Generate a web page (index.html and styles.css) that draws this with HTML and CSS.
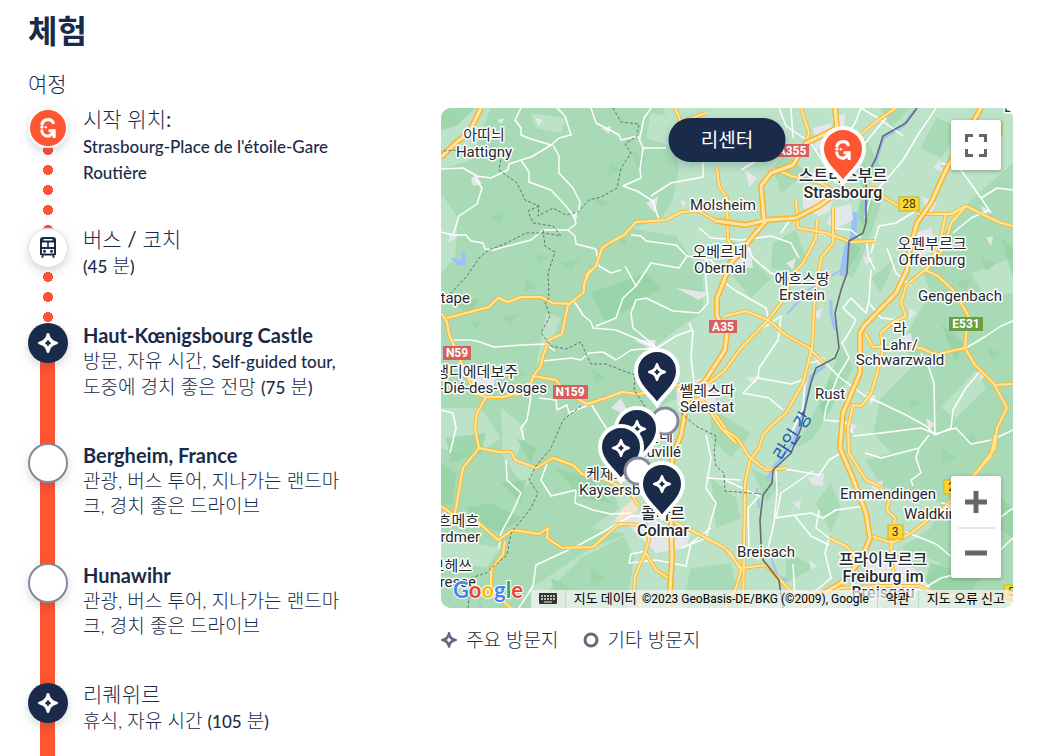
FILE: index.html
```
<!DOCTYPE html>
<html lang="ko">
<head>
    <meta charset="UTF-8">
    <meta name="viewport" content="width=device-width, initial-scale=1.0">
    <title>체험</title>
    <link rel="stylesheet" href="styles.css">
</head>
<body>
    <svg class="sprite" aria-hidden="true">
        <symbol id="star" viewBox="0 0 20 20">
            <path fill-rule="evenodd" d="M10 0C10.900 0 11.300.6 11.600 1.800C12.500 5.500 14.500 7.500 18.200 8.400C19.400 8.700 20 9.100 20 10S19.400 11.300 18.200 11.600C14.500 12.500 12.500 14.500 11.600 18.200C11.300 19.400 10.900 20 10 20S8.700 19.400 8.400 18.200C7.500 14.500 5.500 12.500 1.800 11.600C.6 11.300 0 10.900 0 10S.6 8.700 1.800 8.400C5.500 7.500 7.500 5.500 8.400 1.800C8.700.6 9.100 0 10 0ZM10 6.500Q9 9 6.500 10Q9 11 10 13.500Q11 11 13.500 10Q11 9 10 6.500Z"/>
        </symbol>
        <symbol id="logo" viewBox="0 0 16 20">
            <path d="M13.500 6C13 3.200 11 1.700 8.300 1.700C4.800 1.700 2.300 3.600 1.900 7" fill="none" stroke="currentColor" stroke-width="3.200"/>
            <path d="M1.700 11.500C1.700 15.800 4.500 18.200 8 18.200C10 18.200 11 17.500 14 13.500M8.500 12.700H14.200V20" fill="none" stroke="currentColor" stroke-width="3"/>
            <circle cx="1.900" cy="9" r="1.700"/>
            <circle cx="5.800" cy="9.300" r="1.200"/>
        </symbol>
        <symbol id="pin" viewBox="-24 -24 48 60">
            <path d="M0 33C-5 24-21 14-21-1A21 21 0 0 1 21-1C21 14 5 24 0 33Z" stroke="#fff" stroke-width="4"/>
        </symbol>
    </svg>

    <main class="page">
        <h1>체험</h1>
        <h2>여정</h2>
        <div class="content">
            <ol class="timeline">
                <li class="stop dotted start">
                    <span class="icon icon-start"><svg width="16" height="20"><use href="#logo"/></svg></span>
                    <div class="text">
                        <h3>시작 위치<b>:</b></h3>
                        <p><span class="latin">Strasbourg-Place de l'étoile-Gare Routière</span></p>
                    </div>
                </li>
                <li class="stop dotted ride">
                    <span class="icon icon-bus">
                        <svg width="18" height="22" viewBox="0 0 18 22">
                            <path fill="#1a2b49" fill-rule="evenodd" d="M4 0H14Q17 0 17 3V18H15.500V20Q15.500 21 14.500 21T13.500 20V18.500H4.500V20Q4.500 21 3.500 21T2.500 20V18H1V3Q1 0 4 0ZM4.500 2V3.500H13.500V2ZM3 5.500V10H8.200V5.500ZM9.800 5.500V10H15V5.500ZM3 12V16.500H15V12Z"/>
                            <circle cx="5.500" cy="14.200" r="1.500" fill="#1a2b49"/>
                            <circle cx="12.500" cy="14.200" r="1.500" fill="#1a2b49"/>
                        </svg>
                    </span>
                    <div class="text">
                        <h3>버스 <b>/</b> 코치</h3>
                        <p><span class="latin">(45</span> 분<span class="latin">)</span></p>
                    </div>
                </li>
                <li class="stop">
                    <span class="icon icon-main"><svg width="20" height="20"><use href="#star"/></svg></span>
                    <div class="text">
                        <h3 class="latin-title">Haut-Kœnigsbourg Castle</h3>
                        <p>방문, 자유 시간, <span class="latin">Self-guided tour,</span> 도중에 경치 좋은 전망 <span class="latin">(75</span> 분<span class="latin">)</span></p>
                    </div>
                </li>
                <li class="stop">
                    <span class="icon icon-other"></span>
                    <div class="text">
                        <h3 class="latin-title">Bergheim, France</h3>
                        <p>관광, 버스 투어, 지나가는 랜드마크, 경치 좋은 드라이브</p>
                    </div>
                </li>
                <li class="stop">
                    <span class="icon icon-other"></span>
                    <div class="text">
                        <h3 class="latin-title">Hunawihr</h3>
                        <p>관광, 버스 투어, 지나가는 랜드마크, 경치 좋은 드라이브</p>
                    </div>
                </li>
                <li class="stop">
                    <span class="icon icon-main"><svg width="20" height="20"><use href="#star"/></svg></span>
                    <div class="text">
                        <h3>리퀘위르</h3>
                        <p>휴식, 자유 시간 <span class="latin">(105</span> 분<span class="latin">)</span></p>
                    </div>
                </li>
            </ol>

            <section class="side">
                <div class="map">
                    <svg class="canvas" viewBox="0 0 572 500" preserveAspectRatio="xMidYMid slice">
                        <rect width="572" height="500" fill="#bce2c8"/>
                        <!-- forests -->
                        <g fill="#a8dab5">
                            <path d="M50 0H222L232 30L238 60L232 90L220 112L190 120L235 128L250 150L262 165L262 205L245 215L222 232L205 245L230 260L236 290L205 305L198 335L170 375L178 400L150 420L182 425L193 450L185 500H0V165L14 150L17 110L0 85V62L30 52Z"/>
                            <path d="M572 55L530 92L500 130L482 165L490 185L460 235L475 255L440 290L432 325L450 345L425 352L440 378L500 395L490 420L460 440L500 455L480 480L455 500H572Z"/>
                            <path d="M345 45L365 65L340 85L332 60ZM408 45L425 30L440 60L420 72ZM332 135L355 122L365 150L350 165L330 160ZM420 90L440 95L428 132L412 170L400 165ZM402 235L412 260L385 310L372 330L355 340L380 290ZM290 130L330 170L310 190L285 160ZM270 300L310 325L290 350L270 330ZM270 370L295 390L300 410L275 420ZM310 360L340 375L325 395ZM390 375L400 400L390 425L375 395ZM250 460L290 455L300 500H240ZM345 440L372 460L345 475ZM430 170L455 150L440 185ZM495 10L520 20L500 50L480 40ZM440 0H470L450 20Z"/>
                        </g>
                        <g fill="#bce2c8">
                            <path d="M90 5L125 10L120 25L95 20ZM0 300L40 300L60 330L30 350L0 340ZM60 300L85 320L75 350L95 360L85 380L62 350ZM0 430L60 440L45 460L0 450ZM210 5L240 10L235 40L205 30ZM105 205L120 210L110 235L95 260ZM500 300L535 262L545 280L515 310ZM530 165L572 150V185L545 190ZM90 480L150 440L190 425L140 450L110 480L95 500Z"/>
                        </g>
                        <g fill="#94d2a5" opacity="0.75">
                            <path d="M0 0H34L15 18L0 22ZM5 330L45 325L40 345L10 355ZM0 355L15 365L12 395L0 400ZM25 400L50 395L80 410L60 425L35 415ZM115 360L150 370L170 395L140 390ZM150 185L205 165L220 180L165 215ZM10 195L40 190L30 205ZM75 330L95 340L90 355ZM420 70L432 90L425 120L418 112ZM405 130L420 140L405 165ZM388 270L395 280L384 310L378 300ZM500 215L522 235L515 255ZM550 380L572 400V430L555 420ZM490 455L540 470L525 490L480 485ZM60 375L85 372L80 395ZM435 480L460 470L470 500H440ZM560 130L572 140V170Z"/>
                        </g>
                        <g fill="#9ed5ad">
                            <path d="M190 42L206 50L196 60ZM170 55L180 62L165 70ZM152 90L170 95L160 98ZM120 155L140 150L130 162ZM92 145L108 150L98 156ZM176 132L184 128L186 138ZM60 210L78 205L70 217ZM30 215L42 212L35 222ZM150 260L165 270L155 275ZM70 260L85 265L75 270ZM540 150L556 155L545 163ZM515 175L530 170L525 182ZM545 240L560 245L552 252ZM500 340L515 350L502 355ZM520 330L532 325L538 338ZM468 290L482 295L470 300ZM530 455L548 450L545 462ZM150 460L165 470L150 478ZM110 470L130 480L115 488ZM50 110L62 104L60 116ZM85 170L96 178L82 184Z"/>
                        </g>
                        <!-- water -->
                        <g fill="none" stroke="#9cc0fa" stroke-width="3">
                            <path d="M474 2L462 18L442 30L436 50L427 64"/>
                            <path d="M424 82V112" stroke-width="2"/>
                            <path d="M414 104L412 130L406 140L401 168" stroke-width="6"/>
                            <path d="M390 192V205L394 222M384 258L370 268L364 300L352 335L332 360L326 372" stroke-width="3"/>
                            <path d="M346 206L370 180L400 162M316 380L318 400M330 450L340 475" stroke-width="2"/>
                        </g>
                        <path d="M9 149L20 152L21 143L24 145L25 157L18 158ZM340 468L348 472L342 474ZM328 40L336 46L330 50ZM38 495L41 498L40 500H38Z" fill="#9cc0fa"/>
                        <!-- towns -->
                        <g fill="#e4e7ea">
                            <path d="M362 78L380 82L392 92L388 104L378 108L362 100ZM392 100L410 96L412 112L396 120L386 116ZM372 20L390 15L395 35L375 42ZM375 58L388 62L385 75L368 72ZM405 45L412 62L400 70ZM30 70L36 67L41 76L32 78ZM8 124L16 130L8 134ZM94 10L102 12L98 18ZM56 12L64 10L60 16ZM160 20L170 18L168 26ZM205 95L217 88L214 105ZM239 92L246 94L242 100ZM130 103L137 108L134 114ZM25 262L55 268L50 290L35 288ZM85 275L95 278L88 290ZM235 180L268 185L258 192ZM254 272L268 268L275 295L262 300ZM193 232L215 232L212 242ZM170 300L180 290L190 310ZM180 410L205 403L225 418L250 425L245 440L215 445L195 425ZM452 232L470 225L472 240ZM480 88L496 95L488 108ZM474 125L490 120L496 142L480 148ZM425 283L435 288L430 298ZM372 205L382 200L378 212ZM540 260L545 268L538 272ZM372 245L385 250L378 260ZM305 270L318 268L312 276ZM367 370L383 365L382 378L372 377ZM430 378L442 372L440 392ZM425 450L452 448L475 462L490 480L455 490L430 472ZM352 395L360 392L358 402ZM368 452L376 458L370 462ZM290 145L310 140L312 160L295 158ZM345 155L355 150L352 162ZM415 90L425 80L428 92ZM492 60L498 52L502 64ZM540 98L548 102L544 110ZM422 148L432 150L425 158ZM468 200L476 205L468 212ZM485 310L494 316L488 322ZM505 395L518 400L508 412ZM404 312L416 318L410 325ZM545 130L552 128L550 138ZM304 62L316 70L308 80ZM390 10L405 5L402 25Z"/>
                        </g>
                        <path d="M181 400L192 392L198 402L183 414L173 414ZM236 280L243 276L242 300L236 296Z" fill="#f0e3d2"/>
                        <!-- local roads -->
                        <g fill="none" stroke="#fff" stroke-width="1.500" stroke-linejoin="round">
                            <path d="M80 0L74 12L80 20L80 27L90 31L110 37L118 30L130 27L124 8L116 0"/>
                            <path d="M110 37L102 42L90 49L80 52L68 56L67 62L50 70L36 68L22 60L0 61"/>
                            <path d="M80 52L88 64L88 74L110 82L125 98L134 110M112 37L118 48V65L132 80L139 94L138 102L133 108L135 116L127 122L134 128L135 136L155 141"/>
                            <path d="M34 70L41 80L36 96L18 108L12 127L0 124M12 127L25 127L30 133L42 135L44 141L52 142L90 132L102 122L128 122"/>
                            <path d="M150 0L155 15L165 20L178 27L180 32L197 28L202 40L199 62L200 70L182 78L196 83L212 93L218 112M210 88L230 75L262 69L262 55M202 40L225 40M198 34L203 10L210 0"/>
                            <path d="M155 141L158 158L170 165L180 162M190 127L200 128L205 133L235 137L246 148L238 160L210 155L195 178L184 158"/>
                            <path d="M246 148L270 152L280 165M264 160L267 195L258 205L232 203L205 190L195 192L190 205L192 220L214 238M195 178L182 190L175 210L155 218"/>
                            <path d="M133 193L142 207L150 214L152 220L175 222L194 230L216 240L235 228L251 222L248 215M12 232H28L36 233L53 239L82 237L105 236L114 243"/>
                            <path d="M102 253L130 250L140 252L148 245L162 244L175 252L190 242L216 240M252 222L250 250L253 275L268 280M90 288L86 312L80 320L83 332"/>
                            <path d="M98 290L115 292L116 302L126 297L128 305L140 300L150 296L160 312L172 330L180 345M0 302L12 305L15 320L9 345M65 352L66 372L80 385L72 403L60 425L58 440"/>
                            <path d="M108 350L100 372L110 388L135 382M135 382L134 395L152 402L170 406L190 405M230 410L190 408L160 425L138 437L110 450L95 457L92 478L78 500"/>
                            <path d="M205 443L190 446L188 455L215 452L245 458L250 435L270 420M265 327L270 350L265 380L275 395L265 430L240 440M265 370L300 372"/>
                            <path d="M284 175L295 183L325 200L328 212L322 220L340 208L337 232L318 260L317 270L302 285L328 290L342 302M317 270L350 276L364 271L368 255L382 252M364 271L362 300L348 330"/>
                            <path d="M382 252L397 268L424 288L440 295L465 307L485 318L494 327L493 275L488 260L480 245M494 327L510 320L512 302L525 280L540 262M412 328L440 325L480 320L494 326L515 320L530 336L550 332"/>
                            <path d="M525 240L545 228L560 218L572 213M430 162L428 192L425 205L410 190L402 200L415 212L406 228L401 235L408 250L397 268L385 300L383 312L404 314L412 325"/>
                            <path d="M428 195L440 210L458 212M325 360L350 362L378 367L388 352L400 345M372 363L340 385L335 410L348 408L370 405L382 410L395 402L424 398M335 360L336 385L333 415L326 445"/>
                            <path d="M378 402L375 420L388 430L384 445L390 470L372 485L350 483M354 408L370 428L388 437M424 345L440 350L478 340L475 350L480 365L470 372L472 378M478 340L488 327"/>
                            <path d="M465 424L495 436L512 450L540 460L572 430M319 387L307 400L308 440L318 452M352 456L354 490M284 372L318 388M450 478L480 482L500 470L520 465"/>
                            <path d="M338 0L345 18L370 35L386 60L395 75M420 0L414 15L402 35L408 50L420 40L445 10M420 0L440 12L462 28M495 0L475 30L462 52L445 72L430 88L424 110M425 132L428 150L434 162"/>
                            <path d="M476 102L455 115L438 118L430 145M500 55L520 62L540 90L550 105M540 90L556 80L572 82M512 125L530 110L548 102M300 30L320 50L300 62M390 120L410 122L420 130M284 140L305 135L312 150L330 165L345 172"/>
                            <path d="M262 5L252 15M258 120L270 130L300 132L330 128L350 135L358 150M340 125L350 110M350 0L352 30M375 125L400 130M446 140L455 165L470 178M555 330L572 322M500 395L530 400L545 420L572 400"/>
                        </g>
                        <!-- main roads -->
                        <g class="minor">
                            <path id="minor-roads" d="M287 112L275 113L258 103L240 104L225 112L195 114L183 127L170 134L161 140L155 158L145 168L149 162L143 176L143 184L132 193L127 197L121 226L108 232L102 248L100 258L92 268L88 283L75 287M6 210L48 199L57 190L67 194L80 189L100 189L112 195L130 196M0 205L6 214L8 226L18 250L24 262L33 285L45 289L62 289L80 284M45 289L36 305L34 320L38 340L22 360L14 405M38 340L58 344L70 344L74 352L95 360L112 350L132 357L141 366L160 370L188 382L198 398M92 268L115 272L122 281L135 290L146 296L165 290L181 284L198 286L238 277L250 280L270 270M0 398L14 408L37 414L57 432L72 422L98 426L107 420L106 430L121 440L152 439L178 416L205 417L208 432L204 445L194 468L193 485L200 500M64 433L62 446L50 462L50 482L70 500M234 0L240 14L265 5M276 60L278 78L286 90L287 132L300 150M380 75L393 83L410 82L434 80L444 90L458 98M476 106L510 106L525 98L545 108L560 115L572 118M525 98L510 115L503 140L485 162M505 105L500 130L488 158L465 178L460 195L465 208L452 214L440 225L442 242L436 265L430 286L420 298L412 297L407 320L408 345L425 372L438 378L448 392L446 402L454 410L451 430L450 450L455 478M484 162L497 168L512 182L527 207L524 240L534 257L553 276L566 300L556 320L554 340L535 365M553 277L572 276M424 225L432 239L460 238L480 240L495 247L510 243L524 240M284 208L305 203L327 212L345 227L368 240L384 256M327 212L345 188L350 168L362 155L375 130L376 112M378 165L374 188L371 240L362 275L345 305L330 318L322 327L318 340L309 352L304 375L303 445L302 500M284 322L296 330L309 350L325 362L345 360M327 212L300 240L284 262L268 275M355 92L357 120L385 125L410 134L434 133M392 100L392 135L380 150L376 178M284 440L250 422L235 415L225 405M284 440L300 460L325 457L345 478L365 500M205 445L215 462L229 471M284 500L295 480L300 462L290 446L284 440M554 327L550 348L535 365M535 365L505 398L470 425L451 435L430 428M388 430L405 438L413 447L412 455M362 490L400 480L440 478L478 478L500 488L540 487L572 495M240 300L260 290L280 320L295 335M270 300L284 320M410 35L425 22L440 10L455 0M332 60L350 68L380 75M360 0L368 25L365 35"/>
                        </g>
                        <use class="minor-fill" href="#minor-roads"/>
                        <g class="major">
                            <path id="major-roads" d="M40 0L28 25L17 33L0 49M394 0L396 20L380 28L365 35L352 57L330 65L320 78L323 112M275 113L305 117L325 112L355 110L378 98L392 88L402 80L396 50L396 20M325 113L312 128L298 146L290 155L276 190L276 208L286 225L284 242L266 270L246 294L240 327L232 347L228 375L230 410L231 450L228 500M540 0L520 35L505 62L490 95L476 115L469 140L466 162L455 185L423 218L419 225L419 265L402 305L399 340L411 368L425 405L429 430L420 452L400 475L370 492L360 500"/>
                        </g>
                        <use class="major-fill" href="#major-roads"/>
                        <!-- borders -->
                        <path d="M476 0L465 15L442 28L435 50L425 70L425 115L422 125L408 133L406 165L400 182L394 205L398 240L394 250L375 260L370 275L364 300L360 320L350 345L332 362L331 375L322 387L319 412L320 435L322 452L338 472L342 500" fill="none" stroke="#666970" stroke-width="1.600"/>
                        <path class="border" d="M172 0L180 14L198 16L196 28L184 36L190 45L180 60L176 80L160 89L148 92L137 104L125 107L112 100L97 108L98 98L84 92L76 75L58 62L60 50L20 42L0 43M98 98L87 103L92 115L112 118L120 128L104 125L85 125L66 135L48 142L38 150L26 168L10 185L0 192M102 122L104 138L114 144L107 165L108 190L104 195L109 208L100 225L110 238L125 241L140 234L145 246L150 256L165 256L180 262L194 267L193 282L205 300M140 298L122 312L110 340L95 358L88 372L97 385L90 400L70 425L66 447L45 465L30 470L27 500M240 305L255 318L275 328L273 345L275 358L283 365L284 383L320 386"/>
                        <!-- road signs -->
                        <g class="sign">
                            <rect x="333" y="36" width="35" height="13" fill="#d65f60"/><text x="351" y="47">A355</text>
                            <rect x="2" y="238" width="28" height="14" fill="#d65f60"/><text x="16" y="249">N59</text>
                            <rect x="112" y="277" width="35" height="14" fill="#d65f60"/><text x="129" y="288">N159</text>
                            <rect x="268" y="212" width="28" height="13" fill="#d65f60"/><text x="282" y="223">A35</text>
                            <rect x="508" y="209" width="34" height="14" fill="#689f43"/><text x="525" y="220">E531</text>
                        </g>
                        <g class="sign yellow">
                            <rect x="458" y="89" width="20" height="14"/><text x="468" y="100">28</text>
                            <rect x="447" y="417" width="15" height="14"/><text x="454" y="428">3</text>
                            <rect x="503" y="372" width="28" height="14"/><text x="517" y="383">294</text>
                            <rect x="552" y="13" width="9" height="14"/>
                            <rect x="563" y="477" width="20" height="14"/><text x="570" y="488">5</text>
                        </g>
                        <!-- place names -->
                        <g class="place">
                            <text x="43" y="32">아띠늬</text><text x="43" y="49">Hattigny</text>
                            <text x="282" y="102">Molsheim</text>
                            <text x="279" y="149">오베르네</text><text x="279" y="165">Obernai</text>
                            <text x="361" y="176">에흐스땅</text><text x="361" y="192">Erstein</text>
                            <text x="491" y="141">오펜부르크</text><text x="491" y="157">Offenburg</text>
                            <text x="519" y="193">Gengenbach</text>
                            <text x="459" y="226">라</text><text x="459" y="242">Lahr/</text><text x="459" y="257">Schwarzwald</text>
                            <text x="389" y="291">Rust</text>
                            <text x="266" y="288">쎌레스따</text><text x="266" y="304">Sélestat</text>
                            <text x="325" y="449">Breisach</text>
                            <text x="447" y="391">Emmendingen</text>
                            <text x="567" y="4">L</text>
                        </g>
                        <g class="place from-left">
                            <text x="145" y="371">케제르베르</text><text x="138" y="387">Kaysersberg</text>
                            <text x="463" y="411">Waldkirch</text>
                        </g>
                        <g class="place to-right">
                            <text x="29" y="195">Étape</text>
                            <text x="77" y="269">생디에데보주</text><text x="106" y="285">Saint-Dié-des-Vosges</text>
                            <text x="232" y="333">리보빌레</text><text x="240" y="349">Ribeauvillé</text>
                            <text x="38" y="418">제하흐메흐</text><text x="39" y="434">Gérardmer</text>
                            <text x="31" y="463">라브헤쓰</text><text x="35" y="479">La Bresse</text>
                        </g>
                        <g class="place city">
                            <text x="402" y="73">스트라스부르</text><text x="402" y="90">Strasbourg</text>
                            <text x="222" y="411">콜마르</text><text x="222" y="428">Colmar</text>
                            <text x="442" y="457">프라이부르크</text><text x="442" y="474">Freiburg im</text><text x="442" y="490">Breisgau</text>
                        </g>
                        <text class="river" transform="translate(342 354) rotate(-57)">라인 강</text>
                        <!-- pins -->
                        <g fill="#1a2b49">
                            <use href="#pin" x="192" y="240" width="48" height="60"/>
                            <circle class="ring" cx="224" cy="313" r="13"/>
                            <use href="#pin" x="172" y="298" width="48" height="60"/>
                            <use class="white" href="#star" x="187" y="312" width="18" height="18"/>
                            <use href="#pin" x="156" y="316" width="48" height="60"/>
                            <circle class="ring" cx="197" cy="363" r="13"/>
                            <use href="#pin" x="197" y="353" width="48" height="60"/>
                            <use href="#pin" x="378" y="18" width="48" height="60" fill="#ff5533"/>
                        </g>
                        <g class="white">
                            <use href="#star" x="207" y="255" width="18" height="18"/>
                            <use href="#star" x="171" y="331" width="18" height="18"/>
                            <use href="#star" x="212" y="367" width="18" height="18"/>
                            <use href="#logo" x="394" y="32" width="16" height="20"/>
                        </g>
                        <text class="google" x="12" y="490"><tspan fill="#4285f4">G</tspan><tspan fill="#ea4335">o</tspan><tspan fill="#fbbc05">o</tspan><tspan fill="#4285f4">g</tspan><tspan fill="#34a853">l</tspan><tspan fill="#ea4335">e</tspan></text>
                    </svg>

                    <button class="recenter" type="button">리센터</button>
                    <button class="control fullscreen" type="button" aria-label="전체화면">
                        <svg width="22" height="23" viewBox="0 0 22 23"><path d="M1.500 8V1.500H8M14 1.500H20.500V8M20.500 15V21.500H14M8 21.500H1.500V15" fill="none" stroke="#666" stroke-width="3"/></svg>
                    </button>
                    <div class="control zoom">
                        <button type="button" aria-label="확대"><svg width="22" height="22"><path d="M0 11H22M11 0V22" stroke="#666" stroke-width="5"/></svg></button>
                        <button type="button" aria-label="축소"><svg width="22" height="22"><path d="M0 10H22" stroke="#666" stroke-width="5"/></svg></button>
                    </div>
                    <div class="credits">
                        <button type="button" aria-label="단축키">
                            <svg width="18" height="11" viewBox="0 0 18 11"><rect width="18" height="11" rx="1" fill="#333"/><path d="M2 3H16M2 6H16" stroke="#eee" stroke-width="1.500" stroke-dasharray="2 1"/><path d="M5 9H13" stroke="#eee" stroke-width="1"/></svg>
                        </button>
                        <span>지도 데이터 <small>©2023 GeoBasis-DE/BKG (©2009), Google</small></span>
                        <a href="#">약관</a>
                        <a href="#">지도 오류 신고</a>
                    </div>
                </div>
                <ul class="legend">
                    <li><svg width="16" height="16"><use href="#star"/></svg>주요 방문지</li>
                    <li><svg width="16" height="16"><circle cx="8" cy="8" r="6" fill="none" stroke="#63687f" stroke-width="3"/></svg>기타 방문지</li>
                </ul>
            </section>
        </div>
    </main>
</body>
</html>
```
FILE: styles.css
```
* {
    box-sizing: border-box;
}
body {
    margin: 0;
    background-color: #fff;
    color: #1a2b49;
    font-family: Lato, "Noto Sans CJK KR", sans-serif;
}
h1, h2, h3, p, ol, ul {
    margin: 0;
    padding: 0;
}
ol, ul {
    list-style: none;
}
button {
    border: none;
    padding: 0;
    cursor: pointer;
    font-family: inherit;
}
.sprite {
    position: absolute;
    width: 0;
    height: 0;
}
.page {
    padding: 8px 24px 0 28px;
}
h1 {
    font-size: 32px;
    line-height: 46px;
    font-weight: 700;
}
h2 {
    margin: 16px 0 10px;
    font-size: 21px;
    line-height: 28px;
    font-weight: 300;
}
.content {
    display: grid;
    grid-template-columns: minmax(0, 413px) minmax(0, 1fr);
    align-items: start;
}

/* timeline */
.timeline {
    max-width: 320px;
}
.stop {
    position: relative;
    display: flex;
    gap: 15px;
    min-height: 120px;
}
.stop::before {
    content: "";
    position: absolute;
    top: 20px;
    bottom: -20px;
    left: 12px;
    width: 15px;
    background-color: #ff5533;
}
.dotted::before {
    top: 32px;
    left: 15px;
    width: 10px;
    background: radial-gradient(circle, #ff5533 5px, transparent 5px) 0 0 / 10px 20px;
}
.ride {
    min-height: 95px;
}
.ride::before {
    top: 39px;
}
.icon {
    position: relative;
    z-index: 1;
    flex: none;
    display: flex;
    align-items: center;
    justify-content: center;
    width: 40px;
    height: 40px;
    border-radius: 50%;
    background-color: #fff;
    box-shadow: 0 4px 8px rgba(26, 43, 73, 0.16), 0 0 32px rgba(26, 43, 73, 0.03);
}
.icon-start {
    background-color: #ff5533;
    border: 2px solid #fff;
    color: #fff;
    fill: #fff;
}
.icon-bus {
    border: 1px solid #dcdfe4;
}
.icon-main {
    background-color: #1a2b49;
    fill: #fff;
}
.icon-other {
    border: 2px solid #858999;
}
h3 {
    margin-bottom: 4px;
    font-size: 21px;
    line-height: 21px;
    font-weight: 300;
}
.latin-title {
    margin-bottom: 0;
    font-size: 20px;
    line-height: 25px;
    font-weight: 700;
}
.text p {
    font-size: 19px;
    line-height: 25px;
    font-weight: 300;
}
.text .latin {
    font-size: 17px;
    font-weight: 500;
}

/* map */
.map {
    position: relative;
    height: 500px;
    border-radius: 10px;
    overflow: hidden;
}
.canvas {
    display: block;
    width: 100%;
    height: 100%;
}
.minor, .minor-fill, .major, .major-fill {
    fill: none;
    stroke-linejoin: round;
}
.minor {
    stroke: #fbb936;
    stroke-width: 4;
}
.minor-fill {
    stroke: #ffe69d;
    stroke-width: 2;
}
.major {
    stroke: #fbb32a;
    stroke-width: 6;
}
.major-fill {
    stroke: #ffe5a5;
    stroke-width: 3;
}
.border {
    fill: none;
    stroke: #5f776b;
    stroke-width: 1;
    stroke-dasharray: 3 2;
}
.place, .river {
    font-family: Roboto, "Noto Sans CJK KR", sans-serif;
    font-size: 15px;
    fill: #24282d;
    stroke: #fff;
    stroke-width: 3px;
    stroke-linejoin: round;
    paint-order: stroke;
    text-anchor: middle;
}
.from-left {
    text-anchor: start;
}
.to-right {
    text-anchor: end;
}
.city {
    font-size: 16px;
    font-weight: 500;
}
.river {
    font-size: 18px;
    fill: #1b57b0;
    stroke: none;
    text-anchor: start;
}
.sign {
    font-family: Roboto, sans-serif;
    font-size: 12px;
    font-weight: 700;
    text-anchor: middle;
}
.sign text {
    fill: #fff;
}
.yellow {
    font-weight: 400;
}
.yellow rect {
    fill: #fdd835;
    stroke: #d9b01f;
}
.yellow text {
    fill: #333;
}
.ring {
    fill: #fff;
    stroke: #858999;
    stroke-width: 3px;
}
.white {
    fill: #fff;
    color: #fff;
}
.google {
    font-family: Lato, sans-serif;
    font-size: 22px;
    font-weight: 700;
    stroke: #fff;
    stroke-width: 2px;
    paint-order: stroke;
}
.recenter {
    position: absolute;
    top: 10px;
    left: 50%;
    transform: translateX(-50%);
    width: 117px;
    height: 44px;
    padding-bottom: 4px;
    border-radius: 22px;
    background-color: #1a2b49;
    color: #fff;
    font-size: 19px;
    box-shadow: 0 4px 8px rgba(26, 43, 73, 0.2);
}
.control {
    position: absolute;
    right: 12px;
    width: 50px;
    border-radius: 2px;
    background-color: #fff;
    box-shadow: 0 1px 4px rgba(0, 0, 0, 0.3);
}
.control, .control button {
    display: flex;
    align-items: center;
    justify-content: center;
}
.fullscreen {
    top: 12px;
    height: 50px;
}
.zoom {
    bottom: 30px;
    flex-direction: column;
}
.control button {
    width: 37px;
    height: 51px;
    background: none;
}
.zoom button + button {
    border-top: 2px solid #e6e6e6;
}
.credits {
    position: absolute;
    right: 0;
    bottom: 0;
    display: flex;
    height: 18px;
    background-color: rgba(245, 245, 245, 0.7);
    font-family: Roboto, "Noto Sans CJK KR", sans-serif;
    font-size: 13px;
    line-height: 18px;
    white-space: nowrap;
}
.credits > * {
    padding: 0 8px;
    color: #000;
    text-decoration: none;
    background: none;
}
.credits > * + * {
    border-left: 1px solid #bcdcc6;
}
.credits small {
    margin-left: 2px;
    font-size: 12px;
}

/* legend */
.legend {
    display: flex;
    gap: 24px;
    padding-top: 18px;
    font-size: 19px;
    line-height: 28px;
    font-weight: 300;
}
.legend li {
    display: flex;
    align-items: center;
    gap: 9px;
}
.legend svg {
    fill: #63687f;
}
```
